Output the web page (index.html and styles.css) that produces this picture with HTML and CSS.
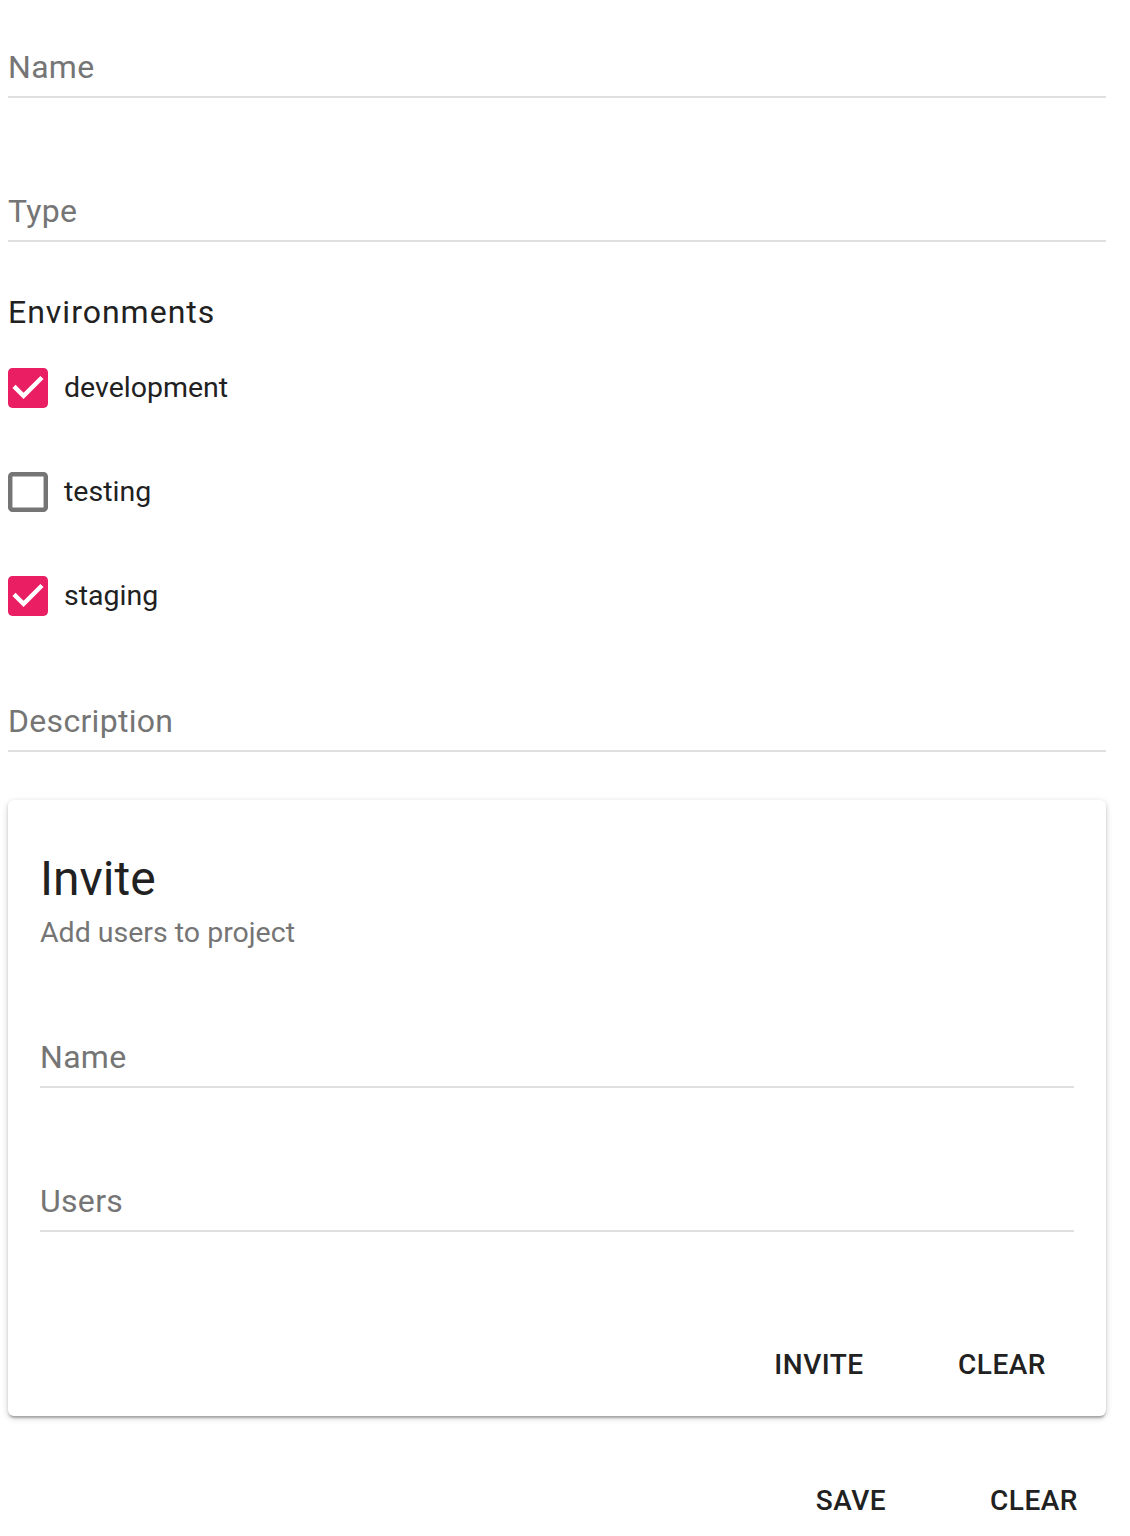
FILE: index.html
```html
<!DOCTYPE html>
<html>
<head>
<meta charset="utf-8">
<link rel="stylesheet" href="styles.css">
</head>
<body>
<div class="page">
  <div class="field first"><div class="label">Name</div></div>
  <div class="field"><div class="label">Type</div></div>

  <div class="group-title">Environments</div>
  <div class="checks">
    <div class="check-row">
      <svg class="box" viewBox="3 3 18 18"><path fill="#e91e63" d="M19 3H5c-1.11 0-2 .9-2 2v14c0 1.1.89 2 2 2h14c1.11 0 2-.9 2-2V5c0-1.1-.89-2-2-2zm-9 14l-5-5 1.41-1.41L10 14.17l7.59-7.59L19 8l-9 9z"/></svg>
      <span class="check-label">development</span>
    </div>
    <div class="check-row">
      <svg class="box" viewBox="3 3 18 18"><path fill="#757575" d="M19 5v14H5V5h14m0-2H5c-1.1 0-2 .9-2 2v14c0 1.1.9 2 2 2h14c1.1 0 2-.9 2-2V5c0-1.1-.9-2-2-2z"/></svg>
      <span class="check-label">testing</span>
    </div>
    <div class="check-row">
      <svg class="box" viewBox="3 3 18 18"><path fill="#e91e63" d="M19 3H5c-1.11 0-2 .9-2 2v14c0 1.1.89 2 2 2h14c1.11 0 2-.9 2-2V5c0-1.1-.89-2-2-2zm-9 14l-5-5 1.41-1.41L10 14.17l7.59-7.59L19 8l-9 9z"/></svg>
      <span class="check-label">staging</span>
    </div>
  </div>

  <div class="field desc"><div class="label">Description</div></div>

  <div class="card">
    <div class="card-title">Invite</div>
    <div class="card-sub">Add users to project</div>
    <div class="field card-first"><div class="label">Name</div></div>
    <div class="field"><div class="label">Users</div></div>
    <div class="actions card-actions">
      <div class="btn">INVITE</div>
      <div class="btn">CLEAR</div>
    </div>
  </div>

  <div class="actions page-actions">
    <div class="btn">SAVE</div>
    <div class="btn">CLEAR</div>
  </div>
</div>
</body>
</html>
```

FILE: styles.css
```css
html, body {
  margin: 0;
  padding: 0;
  background: #ffffff;
}

body {
  font-family: Roboto, "Noto Sans", "Liberation Sans", sans-serif;
  color: #212121;
}

.page {
  width: 1098px;
  margin-left: 8px;
}

.field {
  margin-top: 94px;
  padding-bottom: 10px;
  border-bottom: 2px solid #dfdfdf;
}

.field.first {
  margin-top: 48px;
}

.label {
  font-size: 32px;
  line-height: 38px;
  letter-spacing: 0.3px;
  color: #757575;
}

.group-title {
  margin-top: 51px;
  font-size: 32px;
  line-height: 38px;
  letter-spacing: 1px;
  color: #212121;
}

.checks {
  margin-top: 37px;
  display: flex;
  flex-direction: column;
  gap: 64px;
}

.check-row {
  display: flex;
  align-items: center;
  gap: 16px;
  height: 40px;
}

.box {
  width: 40px;
  height: 40px;
  display: block;
  flex: none;
}

.check-label {
  font-size: 28.5px;
  line-height: 40px;
  color: #212121;
}

.field.desc {
  margin-top: 86px;
}

.card {
  margin-top: 48px;
  background: #fff;
  border-radius: 6px;
  padding: 51px 32px 16px 32px;
  box-shadow: 0 2px 6px rgba(0, 0, 0, 0.2), 0 2px 2px rgba(0, 0, 0, 0.14), 0 4px 2px -2px rgba(0, 0, 0, 0.12);
}

.card-title {
  font-size: 48px;
  line-height: 56px;
  color: #212121;
}

.card-sub {
  margin-top: 9px;
  font-size: 28.5px;
  line-height: 34px;
  color: #757575;
}

.field.card-first {
  margin-top: 88px;
}

.actions {
  display: flex;
  justify-content: flex-end;
  gap: 55px;
}

.card-actions {
  margin-top: 96px;
  margin-right: 8px;
}

.page-actions {
  margin-top: 48px;
  margin-right: 8px;
}

.btn {
  width: 128px;
  height: 72px;
  display: flex;
  align-items: center;
  justify-content: center;
  font-size: 28px;
  font-weight: 500;
  letter-spacing: 0.5px;
  color: #212121;
}
```
